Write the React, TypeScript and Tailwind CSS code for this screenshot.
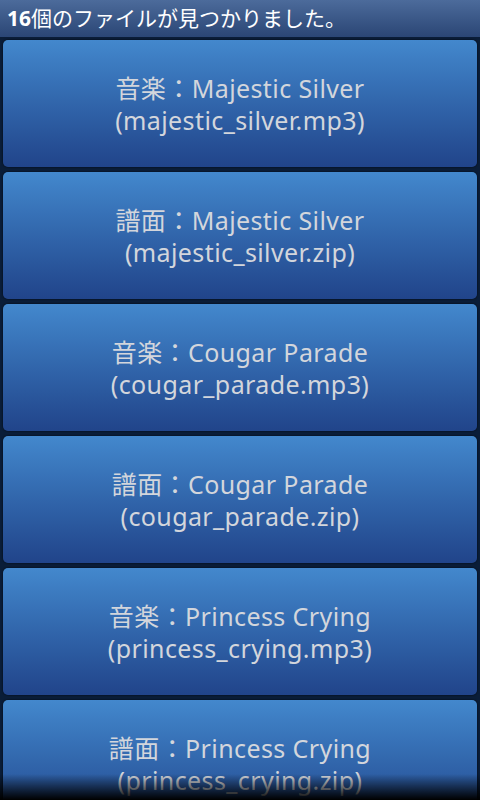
const files = [
  { kind: "音楽", title: "Majestic Silver", file: "majestic_silver.mp3" },
  { kind: "譜面", title: "Majestic Silver", file: "majestic_silver.zip" },
  { kind: "音楽", title: "Cougar Parade", file: "cougar_parade.mp3" },
  { kind: "譜面", title: "Cougar Parade", file: "cougar_parade.zip" },
  { kind: "音楽", title: "Princess Crying", file: "princess_crying.mp3" },
  { kind: "譜面", title: "Princess Crying", file: "princess_crying.zip" },
];

const font = {
  fontFamily: '"Noto Sans", "Noto Sans CJK JP", sans-serif',
};

export default function App() {
  return (
    <div
      className="relative h-[800px] w-[480px] overflow-hidden bg-[#0a1d38]"
      style={font}
    >
      <div className="flex h-[37px] items-center bg-gradient-to-b from-[#4c6b9b] to-[#2b4675] pl-[7px] text-[21px] leading-none text-white">
        <span className="font-bold">16</span>
        <span>個のファイルが見つかりました。</span>
      </div>

      <div className="flex flex-col gap-[5px] px-[3px] pt-[3px]">
        {files.map((f) => (
          <button
            key={f.file}
            className="flex h-[127px] w-full shrink-0 flex-col items-center justify-center rounded-[5px] bg-gradient-to-b from-[#4388cd] to-[#21448a] text-[25px] leading-[32px] tracking-[0.4px] text-[#d3d6dc] shadow-[0_0_2px_rgba(0,0,0,0.8)]"
          >
            <span>
              {f.kind}：{f.title}
            </span>
            <span>({f.file})</span>
          </button>
        ))}
      </div>

      <div className="pointer-events-none absolute bottom-0 left-0 h-[26px] w-full bg-gradient-to-b from-transparent to-[#000000]" />
    </div>
  );
}
